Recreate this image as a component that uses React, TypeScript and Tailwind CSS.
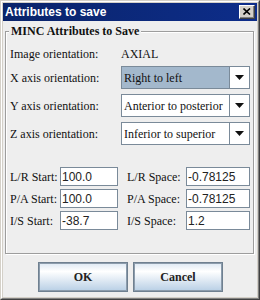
import React from "react";

const serif = { fontFamily: '"Liberation Serif", "Times New Roman", serif' };
const sans = { fontFamily: '"Liberation Sans", Arial, sans-serif' };

function Combo({ text, selected }: { text: string; selected?: boolean }) {
  return (
    <div className="flex h-[23px] w-[129px] border border-[#7a8a99] bg-white">
      <div
        className={`flex flex-1 items-center pl-[2px] text-[12px] text-[#111] ${
          selected ? "bg-[#a3b8cc]" : "bg-white"
        }`}
        style={serif}
      >
        {text}
      </div>
      <div className="flex w-[20px] items-center justify-center border-l border-[#7a8a99] bg-white">
        <svg width="9" height="5" viewBox="0 0 9 5">
          <polygon points="0,0 9,0 4.5,5" fill="#111" />
        </svg>
      </div>
    </div>
  );
}

function Field({ value, w }: { value: string; w: string }) {
  return (
    <div
      className={`flex h-[19px] ${w} items-center border border-[#7a8a99] bg-white pl-[1px] text-[12px] text-[#222]`}
      style={sans}
    >
      {value}
    </div>
  );
}

function Label({ children, w }: { children: React.ReactNode; w: string }) {
  return (
    <div className={`${w} flex items-center whitespace-nowrap text-[12px] text-[#111]`} style={serif}>
      {children}
    </div>
  );
}

export default function App() {
  const rows = [
    ["L/R Start:", "100.0", "L/R Space:", "-0.78125"],
    ["P/A Start:", "100.0", "P/A Space:", "-0.78125"],
    ["I/S Start:", "-38.7", "I/S Space:", "1.2"],
  ];
  return (
    <div className="flex h-[300px] w-[260px] flex-col border border-t-[#d4d0c8] border-l-[#d4d0c8] border-r-[#404040] border-b-[#404040]">
      <div className="flex flex-1 flex-col border border-t-white border-l-white border-r-[#808080] border-b-[#808080] bg-[#d4d0c8] p-[1px]">
        {/* title bar */}
        <div className="flex h-[18px] items-center justify-between bg-[linear-gradient(to_right,#0a246a,#0d2d8a)] pl-[2px] pr-[2px]">
          <span className="text-[12px] font-bold leading-[18px] text-white" style={sans}>
            Attributes to save
          </span>
          <div className="flex h-[14px] w-[16px] items-center justify-center border border-t-white border-l-white border-r-[#404040] border-b-[#404040] bg-[#d4d0c8] shadow-[inset_-1px_-1px_0_#808080]">
            <svg width="8" height="7" viewBox="0 0 8 7" className="mt-[-1px]">
              <path d="M0.5 0.5 L7 6.5 M7 0.5 L0.5 6.5" stroke="#000" strokeWidth="1.6" />
            </svg>
          </div>
        </div>
        {/* content */}
        <div className="flex flex-1 flex-col bg-[#eeeeee]">
          <div className="relative ml-[2px] mt-[10px] h-[223px] w-[249px] border border-[#9d9d9d] shadow-[inset_1px_1px_0_#fff,1px_1px_0_#fff]">
            <div
              className="absolute left-[3px] top-[-8px] h-[14px] bg-[#eeeeee] px-[2px] text-[12px] font-bold leading-[14px] text-[#111]"
              style={serif}
            >
              MINC Attributes to Save
            </div>
            <div className="flex flex-col pl-[4px] pt-[14px]">
              <div className="flex h-[16px] items-center">
                <Label w="w-[111px]">Image orientation:</Label>
                <div className="text-[12px] text-[#111]" style={serif}>
                  AXIAL
                </div>
              </div>
              <div className="mt-[4px] flex flex-col gap-[5px]">
                <div className="flex">
                  <Label w="w-[111px]">X axis orientation:</Label>
                  <Combo text="Right to left" selected />
                </div>
                <div className="flex">
                  <Label w="w-[111px]">Y axis orientation:</Label>
                  <Combo text="Anterior to posterior" />
                </div>
                <div className="flex">
                  <Label w="w-[111px]">Z axis orientation:</Label>
                  <Combo text="Inferior to superior" />
                </div>
              </div>
              <div className="mt-[22px] flex flex-col gap-[3px]">
                {rows.map((r) => (
                  <div key={r[0]} className="flex">
                    <Label w="w-[50px]">{r[0]}</Label>
                    <Field value={r[1]} w="w-[58px]" />
                    <Label w="ml-[9px] w-[59px]">{r[2]}</Label>
                    <Field value={r[3]} w="w-[64px]" />
                  </div>
                ))}
              </div>
            </div>
          </div>
          <div className="mt-[8px] flex justify-center gap-[5px] pl-[1px]">
            {["OK", "Cancel"].map((t) => (
              <div
                key={t}
                className="flex h-[30px] w-[90px] items-center justify-center border border-[#6f8090] bg-[linear-gradient(to_bottom,#dde8f3_0%,#ffffff_30%,#b8cfe5_100%)] text-[12px] font-bold text-[#222] shadow-[inset_0_0_0_1px_#8c9cac]"
                style={serif}
              >
                {t}
              </div>
            ))}
          </div>
        </div>
      </div>
    </div>
  );
}
